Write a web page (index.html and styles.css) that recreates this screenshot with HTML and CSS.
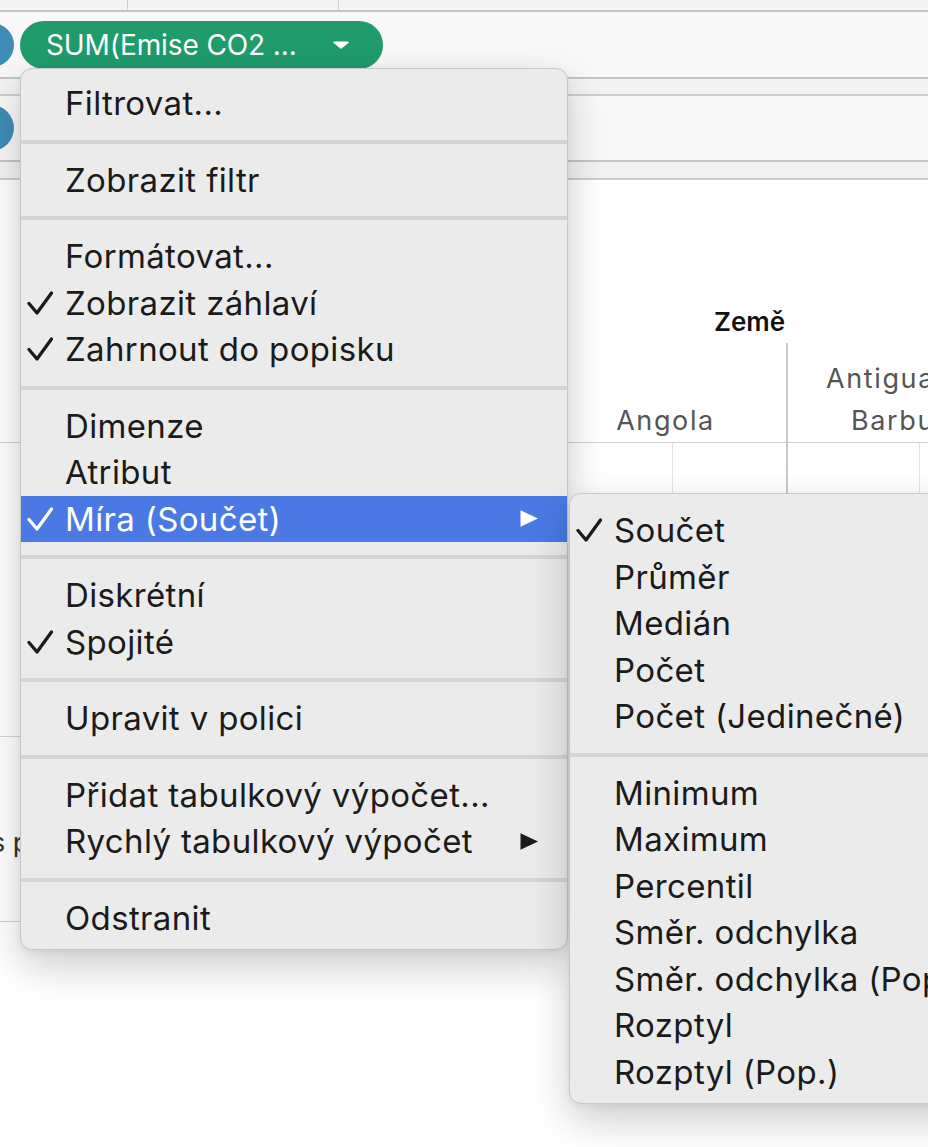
FILE: index.html
```html
<!DOCTYPE html>
<html lang="cs">
<head>
    <meta charset="UTF-8">
    <title>Tableau – kontextová nabídka</title>
    <link rel="stylesheet" href="styles.css">
</head>
<body>
<div class="app">
    <div class="strip">
        <span class="strip__cell strip__cell--first"></span>
        <span class="strip__cell strip__cell--second"></span>
    </div>

    <div class="shelf">
        <span class="shelf__dot"></span>
        <div class="pill">
            <span class="pill__label">SUM(Emise CO2 ...</span>
            <svg class="pill__caret" viewBox="0 0 16 8"><path d="M1 0.5h14a0.8 0.8 0 0 1 .6 1.3L8.6 7.5a0.8 0.8 0 0 1-1.2 0L.4 1.8A0.8 0.8 0 0 1 1 .5z"/></svg>
        </div>
    </div>
    <div class="shelf-gap"></div>
    <div class="shelf shelf--rows">
        <span class="shelf__dot shelf__dot--big"></span>
    </div>
    <div class="shelf-gap shelf-gap--last"></div>

    <div class="view">
        <div class="crosstab">
            <div class="crosstab__title">Země</div>
            <div class="crosstab__corner"></div>
            <div class="crosstab__head crosstab__head--angola">Angola</div>
            <div class="crosstab__head crosstab__head--antigua">
                <span>Antigua a</span>
                <span class="crosstab__line2">Barbuda</span>
            </div>

            <div class="crosstab__rowhead"></div>
            <div class="crosstab__cell"></div>
            <div class="crosstab__cell crosstab__cell--end"></div>
            <div class="crosstab__cell"></div>
            <div class="crosstab__cell"></div>

            <div class="crosstab__rowhead crosstab__rowhead--text"><span>s p</span></div>
            <div class="crosstab__cell"></div>
            <div class="crosstab__cell crosstab__cell--end"></div>
            <div class="crosstab__cell"></div>
            <div class="crosstab__cell"></div>
        </div>
    </div>
</div>

<div class="menu menu--main">
    <div class="menu__item"><span class="menu__check"></span>Filtrovat...</div>
    <div class="menu__sep"></div>
    <div class="menu__item"><span class="menu__check"></span>Zobrazit filtr</div>
    <div class="menu__sep"></div>
    <div class="menu__item"><span class="menu__check"></span>Formátovat...</div>
    <div class="menu__item"><span class="menu__check"><svg viewBox="0 0 26 24"><polyline points="2,12.5 10,22 24.5,2"/></svg></span>Zobrazit záhlaví</div>
    <div class="menu__item"><span class="menu__check"><svg viewBox="0 0 26 24"><polyline points="2,12.5 10,22 24.5,2"/></svg></span>Zahrnout do popisku</div>
    <div class="menu__sep"></div>
    <div class="menu__item"><span class="menu__check"></span>Dimenze</div>
    <div class="menu__item"><span class="menu__check"></span>Atribut</div>
    <div class="menu__item menu__item--active"><span class="menu__check"><svg viewBox="0 0 26 24"><polyline points="2,12.5 10,22 24.5,2"/></svg></span>Míra (Součet)<svg class="menu__arrow" viewBox="0 0 18 17"><path d="M0.5 0.3L18 8.5 0.5 16.7z"/></svg></div>
    <div class="menu__sep"></div>
    <div class="menu__item"><span class="menu__check"></span>Diskrétní</div>
    <div class="menu__item"><span class="menu__check"><svg viewBox="0 0 26 24"><polyline points="2,12.5 10,22 24.5,2"/></svg></span>Spojité</div>
    <div class="menu__sep"></div>
    <div class="menu__item"><span class="menu__check"></span>Upravit v polici</div>
    <div class="menu__sep"></div>
    <div class="menu__item"><span class="menu__check"></span>Přidat tabulkový výpočet...</div>
    <div class="menu__item"><span class="menu__check"></span>Rychlý tabulkový výpočet<svg class="menu__arrow" viewBox="0 0 18 17"><path d="M0.5 0.3L18 8.5 0.5 16.7z"/></svg></div>
    <div class="menu__sep"></div>
    <div class="menu__item"><span class="menu__check"></span>Odstranit</div>
</div>

<div class="menu menu--sub">
    <div class="menu__item"><span class="menu__check"><svg viewBox="0 0 26 24"><polyline points="2,12.5 10,22 24.5,2"/></svg></span>Součet</div>
    <div class="menu__item"><span class="menu__check"></span>Průměr</div>
    <div class="menu__item"><span class="menu__check"></span>Medián</div>
    <div class="menu__item"><span class="menu__check"></span>Počet</div>
    <div class="menu__item"><span class="menu__check"></span>Počet (Jedinečné)</div>
    <div class="menu__sep"></div>
    <div class="menu__item"><span class="menu__check"></span>Minimum</div>
    <div class="menu__item"><span class="menu__check"></span>Maximum</div>
    <div class="menu__item"><span class="menu__check"></span>Percentil</div>
    <div class="menu__item"><span class="menu__check"></span>Směr. odchylka</div>
    <div class="menu__item"><span class="menu__check"></span>Směr. odchylka (Pop.)</div>
    <div class="menu__item"><span class="menu__check"></span>Rozptyl</div>
    <div class="menu__item"><span class="menu__check"></span>Rozptyl (Pop.)</div>
</div>
</body>
</html>
```

FILE: styles.css
```css
html,
body {
    margin: 0;
    padding: 0;
    width: 928px;
    height: 1147px;
    overflow: hidden;
    background: #fff;
    font-family: Inter, "Noto Sans", sans-serif;
}

.app {
    width: 100%;
    height: 100%;
    display: flex;
    flex-direction: column;
}

/* shelves on top */
.strip {
    display: flex;
    height: 10px;
    background: #f4f4f4;
    border-bottom: 2px solid #c4c4c4;
}

.strip__cell {
    border-right: 1px solid #cfcfcf;
}

.strip__cell--first {
    width: 127px;
}

.strip__cell--second {
    width: 210px;
}

.shelf {
    display: flex;
    align-items: center;
    gap: 6px;
    height: 65px;
    background: #f8f8f8;
    border-bottom: 2px solid #c6c6c6;
}

.shelf--rows {
    height: 64px;
}

.shelf-gap {
    height: 15px;
    background: #f3f3f3;
    border-bottom: 2px solid #cdcdcd;
}

.shelf-gap--last {
    height: 16px;
}

.shelf__dot {
    width: 44px;
    height: 44px;
    margin-left: -30px;
    border-radius: 50%;
    background: #3f8db6;
}

.shelf__dot--big {
    width: 46px;
    height: 46px;
    margin-left: -32px;
}

.pill {
    display: flex;
    align-items: center;
    height: 48px;
    width: 363px;
    box-sizing: border-box;
    padding: 0 0 0 26px;
    border-radius: 24px;
    background: #1f9b6c;
    color: #fff;
    font-size: 28px;
}

.pill__label {
    width: 287px;
    letter-spacing: -.1px;
}

.pill__caret {
    width: 16px;
    height: 8px;
    fill: #fff;
}

/* the crosstab */
.view {
    flex: 1;
    background: #fff;
    padding-top: 120px;
}

.crosstab {
    display: grid;
    grid-template-columns: 553px 120px 115px 132px 100px;
    grid-template-rows: 43px 100px 294px 185px;
    color: #555;
    font-size: 27px;
    letter-spacing: .06em;
}

.crosstab__title {
    grid-column: 2 / 6;
    padding-left: 161px;
    color: #111;
    font-size: 26px;
    font-weight: 600;
    letter-spacing: 0;
    line-height: 43px;
}

.crosstab__head {
    grid-column: span 2;
    display: flex;
    align-items: flex-end;
    justify-content: center;
    text-align: center;
    line-height: 42px;
    border-bottom: 1px solid #cfcfcf;
}

.crosstab__head--angola {
    padding-right: 8px;
    border-right: 2px solid #c9c9c9;
}

.crosstab__head--antigua {
    flex-direction: column;
    justify-content: flex-end;
    align-items: flex-start;
    padding-left: 38px;
    white-space: nowrap;
}

.crosstab__line2 {
    padding-left: 25px;
}

.crosstab__corner {
    border-bottom: 1px solid #cfcfcf;
}

.crosstab__rowhead {
    border-bottom: 1px solid #d3d3d3;
}

.crosstab__rowhead--text {
    display: flex;
    align-items: center;
    padding-top: 26px;
    color: #333;
    letter-spacing: 0;
}

.crosstab__rowhead--text span {
    margin-left: -9px;
}

.crosstab__cell {
    border-right: 1px solid #e2e2e2;
    border-bottom: 1px solid #e2e2e2;
}

.crosstab__cell--end {
    border-right: 2px solid #c9c9c9;
}

/* context menus */
.menu {
    position: absolute;
    box-sizing: border-box;
    background: #ebebeb;
    border: 1px solid #c8c8c8;
    border-radius: 12px;
    box-shadow: 0 16px 40px rgba(0, 0, 0, .2), 0 2px 6px rgba(0, 0, 0, .06);
    color: #1b1b1b;
    font-size: 33px;
    letter-spacing: .35px;
}

.menu--main {
    left: 20px;
    top: 68px;
    width: 548px;
    padding: 11px 0 8px;
}

.menu--sub {
    left: 569px;
    top: 493px;
    width: 420px;
    padding: 13px 0 8px;
}

.menu__item {
    display: flex;
    align-items: center;
    height: 46.5px;
    white-space: nowrap;
}

.menu__item--active {
    background: #4a79e4;
    color: #fff;
}

.menu__check {
    flex: none;
    display: flex;
    align-items: center;
    width: 44px;
    height: 100%;
}

.menu__check svg {
    width: 26px;
    height: 24px;
    margin-left: 6px;
    fill: none;
    stroke: currentColor;
    stroke-width: 3.3;
    stroke-linecap: round;
    stroke-linejoin: round;
}

.menu__arrow {
    flex: none;
    width: 18px;
    height: 17px;
    margin: 0 29px 0 auto;
    fill: currentColor;
}

.menu__sep {
    height: 4px;
    margin: 13px 0;
    background: #d4d4d4;
}
```
